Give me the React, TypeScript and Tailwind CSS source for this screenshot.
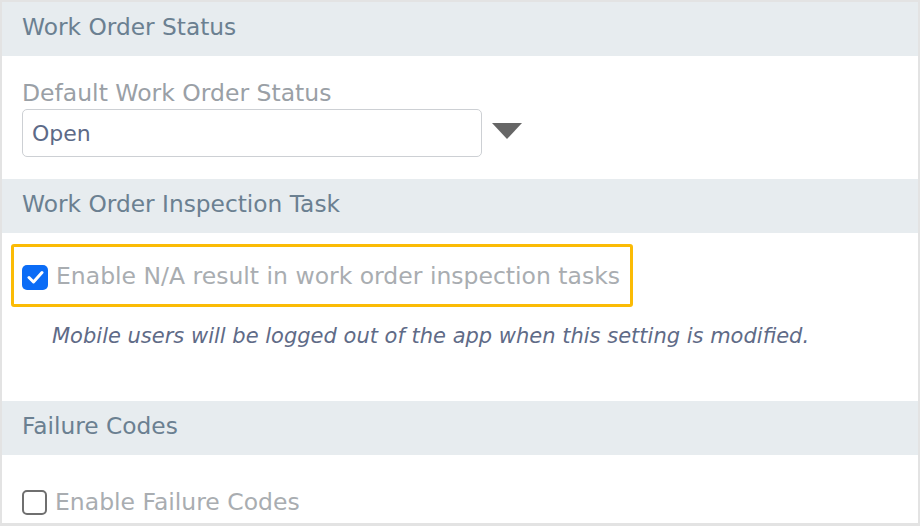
import React, { useState } from "react";

const SectionHeader = ({ title }: { title: string }) => (
  <div className="flex items-center h-[54px] bg-[#e7ecef] px-5 pb-[3px] text-[23.3px] text-[#6b8091]">
    {title}
  </div>
);

const CheckBox = ({ checked, onClick }: { checked: boolean; onClick: () => void }) =>
  checked ? (
    <span
      onClick={onClick}
      className="flex items-center justify-center w-[26px] h-[25px] rounded-[5px] bg-[#0b6cf6] shrink-0"
    >
      <svg width="17" height="14" viewBox="0 0 17 14" fill="none">
        <path
          d="M2 7.5 L6.5 12 L15 2.5"
          stroke="white"
          strokeWidth="3"
          strokeLinecap="round"
          strokeLinejoin="round"
        />
      </svg>
    </span>
  ) : (
    <span
      onClick={onClick}
      className="block w-[25px] h-[25px] rounded-[5px] border-2 border-[#6f6f6f] bg-white shrink-0"
    />
  );

export default function App() {
  const [naEnabled, setNaEnabled] = useState<boolean>(true);
  const [failureCodes, setFailureCodes] = useState<boolean>(false);

  return (
    <div className="w-[920px] h-[526px] overflow-hidden bg-white border-2 border-b-[3px] border-[#e3e3e3] font-['DejaVu_Sans',sans-serif]">
      <SectionHeader title="Work Order Status" />
      <div className="h-[123px] px-5 pt-[24px]">
        <div className="text-[23.5px] leading-[27px] text-[#9aa0a6]">Default Work Order Status</div>
        <div className="flex items-center mt-[2px]">
          <div className="flex items-center w-[460px] h-[48px] rounded-[5px] border-[1.5px] border-[#cdd0d4] px-[9px] text-[22px] text-[#5d6a87]">
            Open
          </div>
          <svg className="ml-[9px] -mt-[4px]" width="32" height="18" viewBox="0 0 32 18">
            <path d="M1 1 H31 L16 17 Z" fill="#666666" />
          </svg>
        </div>
      </div>
      <SectionHeader title="Work Order Inspection Task" />
      <div className="h-[168px] pt-[11px] pl-[9px]">
        <div className="inline-flex items-center gap-[8px] h-[63px] pl-[8px] pr-[10px] pt-[3px] border-[3px] border-[#fbbb05] rounded-[3px]">
          <CheckBox checked={naEnabled} onClick={() => setNaEnabled(!naEnabled)} />
          <span className="text-[23.5px] text-[#a9adb1]">Enable N/A result in work order inspection tasks</span>
        </div>
        <div className="mt-[14px] pl-[41px] italic text-[21px] text-[#5f6b87]">
          Mobile users will be logged out of the app when this setting is modified.
        </div>
      </div>
      <SectionHeader title="Failure Codes" />
      <div className="px-5 pt-[34px] flex items-center gap-[8px]">
        <CheckBox checked={failureCodes} onClick={() => setFailureCodes(!failureCodes)} />
        <span className="text-[23.5px] leading-[26px] text-[#a9adb1]">Enable Failure Codes</span>
      </div>
    </div>
  );
}
